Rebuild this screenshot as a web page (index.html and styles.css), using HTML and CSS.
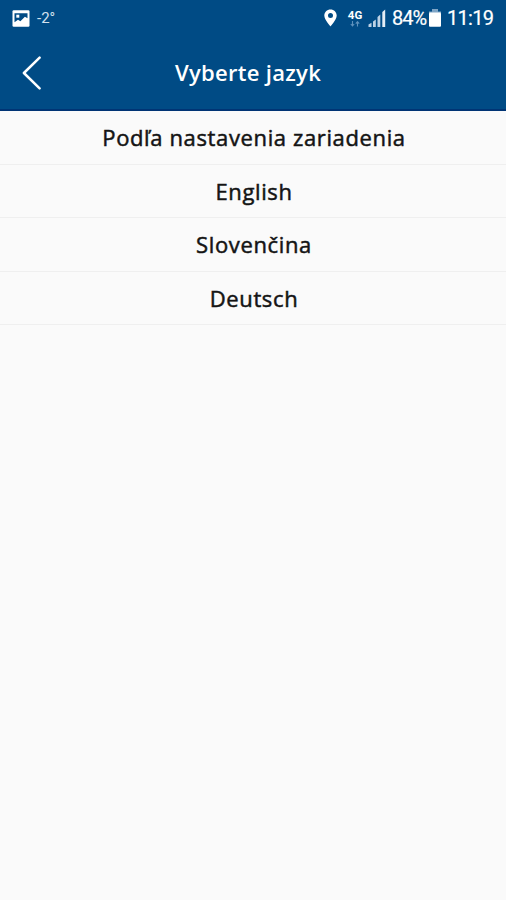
FILE: index.html
```html
<!DOCTYPE html>
<html lang="sk">
<head>
<meta charset="utf-8">
<title>Vyberte jazyk</title>
<link rel="stylesheet" href="styles.css">
</head>
<body>
<header class="top">
  <div class="status">
    <svg class="photo" width="18" height="17" viewBox="0 0 18 17"><rect x="0.5" y="0.3" width="17" height="16.4" rx="1.2" fill="#fff"/><path d="M2.5 3.2h13v5l-2.6-1.4-4.5 4.4-2.4-1.4-3.5 2.5z" fill="#004b85"/><path d="M4.3 4.7h3v3h-3z" fill="#fff"/></svg>
    <span class="temp">-2°</span>
    <svg class="pin" width="13" height="18" viewBox="0 0 13 18"><path fill="#fff" fill-rule="evenodd" d="M6.5 0.4C3 0.4 0.3 3.1 0.3 6.6c0 4.3 6.2 10.8 6.2 10.8s6.2-6.5 6.2-10.8C12.7 3.1 10 .4 6.5.4zm0 3.7a2.5 2.5 0 1 1 0 5 2.5 2.5 0 0 1 0-5z"/></svg>
    <span class="net"><span class="gen">4G</span><svg width="10" height="6" viewBox="0 0 10 6"><path d="M2.5 0v4.5M.8 3l1.7 2 1.7-2M7.5 5.5V1M5.8 2.7l1.7-2 1.7 2" fill="none" stroke="#5f92bd" stroke-width="1.1"/></svg></span>
    <svg class="signal" width="18" height="18" viewBox="0 0 18 18"><path d="M0.5 18v-2.5l3-1.7V18zM5 18v-5.5l2.8-2V18zM9.5 18V8l2.8-2.5V18z" fill="#bdd2e5"/><path d="M14.3 18V3L17.2 .5V18z" fill="#e4edf5"/></svg>
    <span class="pct">84%</span>
    <svg class="battery" width="12" height="18" viewBox="0 0 12 18"><path d="M3 0h6v2.5h3V4H0V2.5h3z" fill="#7fa5c6"/><rect y="3.5" width="12" height="14.2" rx="1" fill="#fff"/></svg>
    <span class="clock">11:19</span>
  </div>
  <div class="bar">
    <svg class="back" width="20" height="34" viewBox="0 0 20 34"><path d="M17.6 1.7 1.9 17l15.7 15.3" fill="none" stroke="#fff" stroke-width="2.5" stroke-linecap="round" stroke-linejoin="round"/></svg>
    <h1 class="title">Vyberte jazyk</h1>
  </div>
</header>
<ul class="list">
  <li>Podľa nastavenia zariadenia</li>
  <li>English</li>
  <li>Slovenčina</li>
  <li>Deutsch</li>
</ul>
</body>
</html>
```
FILE: styles.css
```css
body {
  margin: 0;
  min-height: 900px;
  background: #fafafa;
  color: #141414;
  font-family: "Open Sans", sans-serif;
}

.top {
  box-sizing: border-box;
  height: 111px;
  background: #004b85;
  border-bottom: 2px solid #003474;
  color: #fff;
}

.status {
  display: flex;
  align-items: center;
  height: 36px;
  padding: 0 13px 0 12px;
  font-family: Roboto, sans-serif;
}

.temp {
  margin-left: 7px;
  font-size: 15px;
  color: #d3e1ee;
}

.pin {
  margin-left: auto;
}

.net {
  display: flex;
  flex-direction: column;
  align-items: center;
  width: 16px;
  margin-left: 10px;
}

.gen {
  font-size: 11.5px;
  font-weight: 700;
  line-height: 11px;
}

.signal {
  margin-left: 5px;
}

.pct {
  width: 35px;
  margin-left: 6px;
  font-size: 20px;
  letter-spacing: -1px;
  white-space: nowrap;
  -webkit-text-stroke: 0.2px #fff;
}

.battery {
  margin-left: 2px;
}

.clock {
  width: 46px;
  margin-left: 6px;
  font-size: 20px;
  letter-spacing: -0.7px;
  -webkit-text-stroke: 0.2px #fff;
}

.bar {
  display: grid;
  grid-template-columns: 20px 1fr 20px;
  align-items: center;
  height: 73px;
  padding: 0 32px 0 22px;
}

.title {
  margin: -1px 0 0;
  font-size: 22px;
  font-weight: 600;
  line-height: 30px;
  letter-spacing: 0.3px;
  text-align: center;
}

.list {
  margin: 0;
  padding: 0;
  list-style: none;
}

.list li {
  box-sizing: border-box;
  height: 53.5px;
  padding-left: 2px;
  border-bottom: 1px solid #efefef;
  font-size: 22px;
  line-height: 53.5px;
  letter-spacing: 0.63px;
  -webkit-text-stroke: 0.5px #141414;
  text-align: center;
}
```
